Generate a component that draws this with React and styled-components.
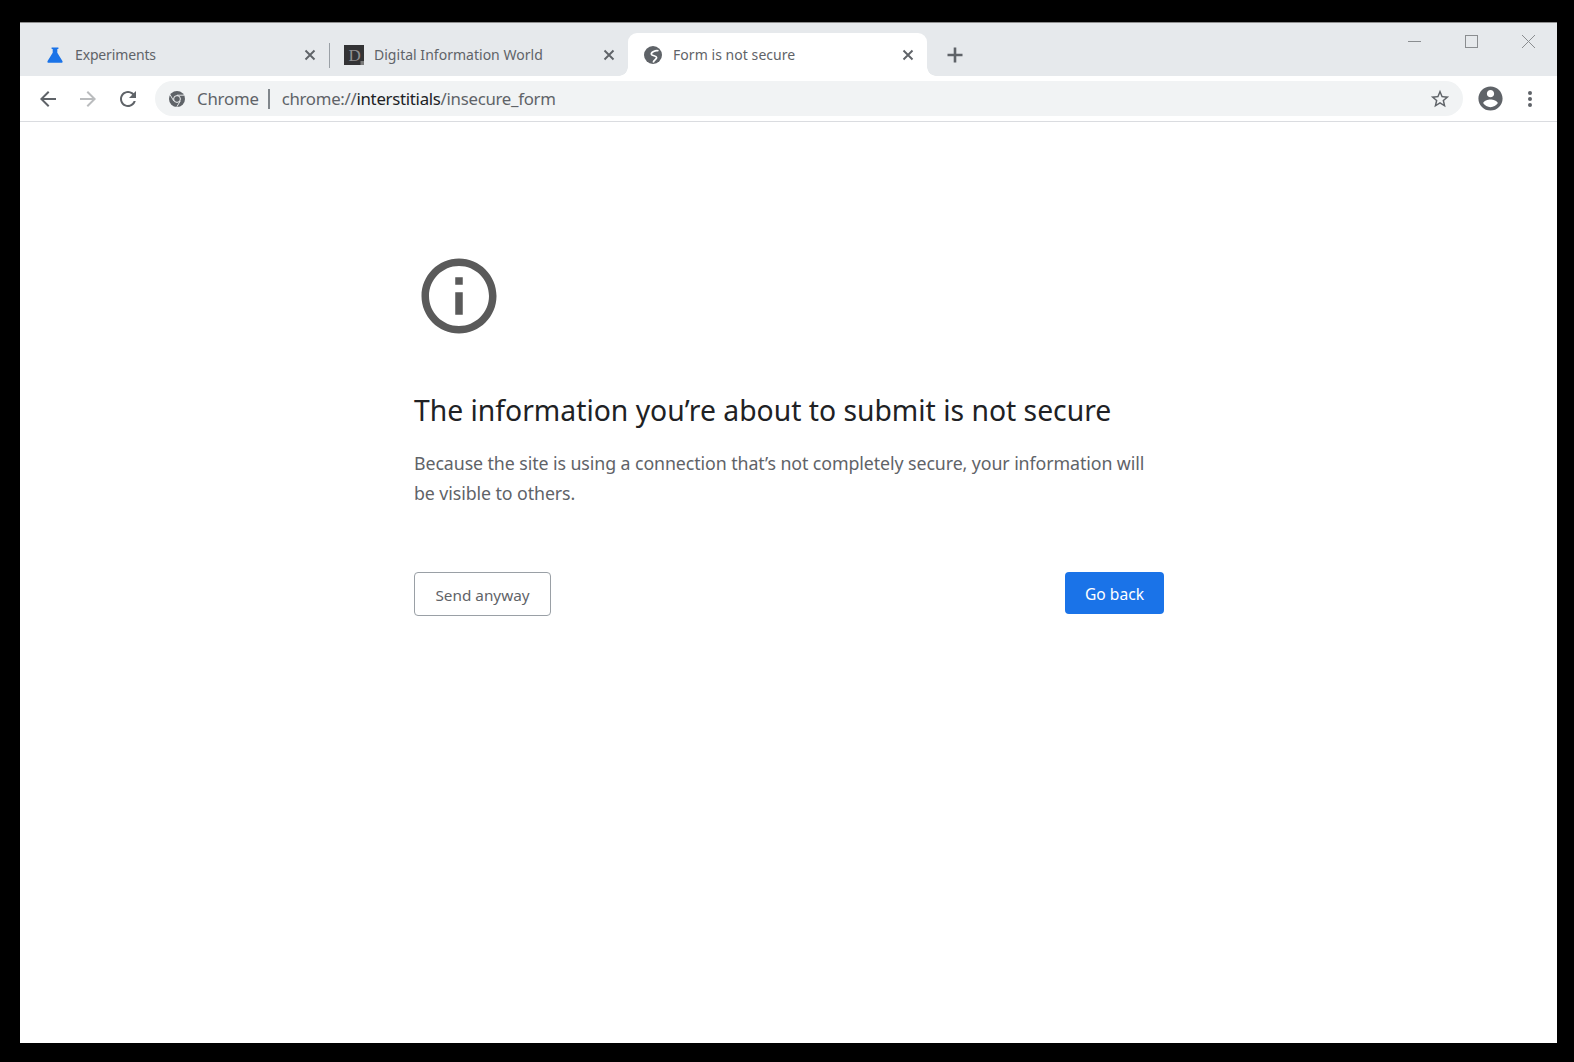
import React from "react";
import styled, { createGlobalStyle } from "styled-components";

const Global = createGlobalStyle`
  html, body { margin: 0; padding: 0; background: #000; }
  body { font-family: "Noto Sans", "Open Sans", sans-serif; }
`;

const Screen = styled.div`
  width: 1574px;
  height: 1062px;
  padding: 22px 17px 20px 20px;
  box-sizing: border-box;
  background: #000;
`;
const Win = styled.div`
  height: 100%;
  display: flex;
  flex-direction: column;
  background: #fff;
  border-top: 1px solid #8e8e8e;
`;
const TabStrip = styled.div`
  height: 53px;
  flex: none;
  display: flex;
  padding-top: 10px;
  box-sizing: border-box;
  background: #e6e9ec;
`;
const Tab = styled.div`
  position: relative;
  width: ${(p) => p.$w}px;
  height: 43px;
  box-sizing: border-box;
  padding: 0 ${(p) => p.$pr}px 0 ${(p) => p.$pl}px;
  display: flex;
  align-items: center;
  background: ${(p) => (p.$active ? "#fff" : "transparent")};
  border-radius: ${(p) => (p.$active ? "9px 9px 0 0" : "0")};
  ${(p) =>
    p.$active &&
    `
    &::before, &::after {
      content: "";
      position: absolute;
      bottom: 0;
      width: 9px;
      height: 9px;
    }
    &::before { left: -9px; background: radial-gradient(circle at 0 0, transparent 8.5px, #fff 9px); }
    &::after { right: -9px; background: radial-gradient(circle at 100% 0, transparent 8.5px, #fff 9px); }
  `}
`;
const TabIcon = styled.span`
  display: flex;
  flex: none;
  width: ${(p) => p.$w}px;
  margin-right: ${(p) => p.$gap}px;
`;
const TabTitle = styled.span`
  flex: 1;
  font-size: 14px;
  color: #5f6368;
  white-space: nowrap;
  line-height: 20px;
  letter-spacing: ${(p) => p.$ls}px;
`;
const TabClose = styled.svg`
  display: block;
  flex: none;
`;
const TabSep = styled.div`
  width: 1px;
  height: 25px;
  flex: none;
  margin-top: 10px;
  background: #9aa0a6;
`;
const NewTab = styled.svg`
  display: block;
  flex: none;
  margin: 14px 0 0 20px;
`;
const Caption = styled.div`
  margin-left: auto;
  display: flex;
  margin-top: -10px;
`;
const CapBtn = styled.svg`
  display: block;
  width: 15px;
  height: 15px;
  margin: ${(p) => p.$m};
`;
const Toolbar = styled.div`
  height: 46px;
  flex: none;
  display: flex;
  align-items: center;
  box-sizing: border-box;
  padding: 0 7px 0 7.5px;
  background: #fff;
  border-bottom: 1px solid #dadce0;
`;
const NavBtn = styled.div`
  width: 40px;
  height: 24px;
  flex: none;
  display: flex;
  justify-content: center;
  align-items: center;
`;
const Omni = styled.div`
  flex: none;
  width: 1308px;
  height: 35px;
  margin-left: 7.5px;
  border-radius: 18px;
  background: #f1f3f4;
  display: flex;
  align-items: center;
  padding: 0 12px 0 14px;
  box-sizing: border-box;
  font-size: 16.8px;
  color: #5f6368;
  white-space: nowrap;
`;
const OriginChip = styled.span`
  margin-left: 12px;
  letter-spacing: -0.2px;
`;
const ChipSep = styled.span`
  width: 2px;
  height: 20px;
  margin: 0 12px 0 9px;
  background: #80868b;
  flex: none;
`;
const UrlHost = styled.span`
  color: #202124;
`;
const Url = styled.span`
  flex: 1;
  letter-spacing: -0.28px;
`;
const ProfileBtn = styled.svg`
  display: block;
  flex: none;
  margin-left: 13px;
`;
const MenuBtn = styled.svg`
  display: block;
  flex: none;
  margin-left: 22px;
`;
const Page = styled.main`
  flex: 1;
  background: #fff;
  padding: 129px 0 0 394px;
`;
const Content = styled.div`
  width: 750px;
  margin: 0;
`;
const InfoIcon = styled.svg`
  display: block;
  width: 90px;
  height: 90px;
  margin-bottom: 49px;
`;
const Heading = styled.h1`
  margin: 0 0 18px;
  font-weight: 400;
  font-size: 28.3px;
  line-height: 40px;
  color: #202124;
  white-space: nowrap;
`;
const Para = styled.p`
  margin: 0;
  max-width: 735px;
  font-size: 17.8px;
  letter-spacing: -0.09px;
  line-height: 30px;
  color: #5f6368;
`;
const Actions = styled.div`
  display: flex;
  justify-content: space-between;
  align-items: flex-start;
  margin-top: 64px;
`;
const SecondaryBtn = styled.button`
  width: 137px;
  height: 44px;
  padding: 2px 0 0;
  background: #fff;
  border: 1px solid #9aa0a6;
  border-radius: 4px;
  color: #5f6368;
  font: 400 15.3px "Noto Sans", sans-serif;
`;
const PrimaryBtn = styled.button`
  width: 99px;
  height: 42px;
  padding: 2px 0 0;
  background: #1a73e8;
  border: none;
  border-radius: 4px;
  color: #fff;
  font: 400 15.6px "Noto Sans", sans-serif;
`;

const Mat = ({ d, size = 24, color = "#5f6368" }) => (
  <svg width={size} height={size} viewBox="0 0 24 24" fill={color} style={{ display: "block", flex: "none" }}>
    <path d={d} />
  </svg>
);

const ARROW = "M20 11H7.83l5.59-5.59L12 4l-8 8 8 8 1.41-1.41L7.83 13H20v-2z";
const FWD = "M4 11h12.17l-5.59-5.59L12 4l8 8-8 8-1.41-1.41L16.17 13H4v-2z";
const RELOAD = "M17.65 6.35C16.2 4.9 14.21 4 12 4c-4.42 0-7.99 3.58-7.99 8s3.57 8 7.99 8c3.73 0 6.84-2.55 7.73-6h-2.08c-.82 2.33-3.04 4-5.65 4-3.31 0-6-2.69-6-6s2.69-6 6-6c1.66 0 3.14.69 4.22 1.78L13 11h7V4l-2.35 2.35z";
const STAR = "M22 9.24l-7.19-.62L12 2 9.19 8.63 2 9.24l5.46 4.73L5.82 21 12 17.27 18.18 21l-1.63-7.03L22 9.24zM12 15.4l-3.76 2.27 1-4.28-3.32-2.88 4.38-.38L12 6.1l1.71 4.04 4.38.38-3.32 2.88 1 4.28L12 15.4z";
const ACCOUNT = "M12 2C6.48 2 2 6.48 2 12s4.48 10 10 10 10-4.48 10-10S17.52 2 12 2zm0 3c1.66 0 3 1.34 3 3s-1.34 3-3 3-3-1.34-3-3 1.34-3 3-3zm0 14.2c-2.5 0-4.71-1.28-6-3.22.03-1.99 4-3.08 6-3.08 1.99 0 5.97 1.09 6 3.08-1.29 1.94-3.5 3.22-6 3.22z";
const INFO = "M11 7h2v2h-2zm0 4h2v6h-2zm1-9C6.48 2 2 6.48 2 12s4.48 10 10 10 10-4.48 10-10S17.52 2 12 2zm0 18c-4.41 0-8-3.59-8-8s3.59-8 8-8 8 3.59 8 8-3.59 8-8 8z";

const Close = () => (
  <TabClose width="12" height="12" viewBox="0 0 12 12">
    <path d="M1.5 1.5l9 9M10.5 1.5l-9 9" stroke="#5f6368" strokeWidth="1.9" fill="none" />
  </TabClose>
);

const Flask = () => (
  <svg width="16" height="16" viewBox="0 0 16 16" style={{ display: "block" }}>
    <path d="M4.6 0.5h6.8v1.6h-1.1v3.6L15.4 14c.5 1 .1 1.8-1 1.8H1.6c-1.1 0-1.5-.8-1-1.8L5.7 5.7V2.1H4.6z" fill="#1a73e8" />
  </svg>
);

const DFav = () => (
  <svg width="20" height="20" viewBox="0 0 20 20" style={{ display: "block" }}>
    <rect width="20" height="20" fill="#333335" />
    <rect x="16.5" y="16" width="3.5" height="4" fill="#7a7a7a" />
    <text x="4.5" y="16" fontFamily="Liberation Serif, serif" fontSize="17" fill="#8f8f8f">D</text>
  </svg>
);

const Globe = () => (
  <svg width="18" height="18" viewBox="0 0 18 18" style={{ display: "block" }}>
    <circle cx="9" cy="9" r="9" fill="#5f6368" />
    <path d="M14.5 4.8C11.5 3.8 6.8 6.2 7.4 8.3C8 10.2 12.2 9.4 12.6 11.4C12.9 13 10 14 9.2 16.4" stroke="#fff" strokeWidth="1.7" fill="none" />
  </svg>
);

const ChromeLogo = () => (
  <svg width="16" height="16" viewBox="0 0 16 16" style={{ display: "block", flex: "none" }}>
    <circle cx="8" cy="8" r="8" fill="#5f6368" />
    <circle cx="8" cy="8" r="3.4" fill="#5f6368" stroke="#f1f3f4" strokeWidth="1" />
    <path d="M8 4.2h7M4.7 9.9L1.2 3.9M11.3 9.9l-3.5 6" stroke="#f1f3f4" strokeWidth="0.9" fill="none" />
  </svg>
);

export default function App() {
  return (
    <>
      <Global />
      <Screen>
        <Win>
          <TabStrip>
            <Tab $w={309} $pl={27} $pr={13}>
              <TabIcon $w={16} $gap={12}><Flask /></TabIcon>
              <TabTitle $ls={-0.15}>Experiments</TabTitle>
              <Close />
            </Tab>
            <TabSep />
            <Tab $w={298} $pl={14} $pr={13}>
              <TabIcon $w={20} $gap={10}><DFav /></TabIcon>
              <TabTitle $ls={0.02}>Digital Information World</TabTitle>
              <Close />
            </Tab>
            <Tab $active $w={299} $pl={16} $pr={13}>
              <TabIcon $w={18} $gap={11}><Globe /></TabIcon>
              <TabTitle $ls={0.05}>Form is not secure</TabTitle>
              <Close />
            </Tab>
            <NewTab width="16" height="16" viewBox="0 0 16 16">
              <path d="M8 .5v15M.5 8h15" stroke="#5f6368" strokeWidth="2.6" fill="none" />
            </NewTab>
            <Caption>
              <CapBtn $m="12px 0 0 0" viewBox="0 0 15 15">
                <path d="M1 6.5h13" stroke="#8a8d90" strokeWidth="1" fill="none" />
              </CapBtn>
              <CapBtn $m="11px 0 0 42px" viewBox="0 0 15 15">
                <rect x="1.5" y="1.5" width="12" height="12" stroke="#8a8d90" fill="none" />
              </CapBtn>
              <CapBtn $m="11px 21px 0 42px" viewBox="0 0 15 15">
                <path d="M1 1l13 13M14 1L1 14" stroke="#8a8d90" strokeWidth="1" fill="none" />
              </CapBtn>
            </Caption>
          </TabStrip>
          <Toolbar>
            <NavBtn><Mat d={ARROW} /></NavBtn>
            <NavBtn><Mat d={FWD} color="#babcbe" /></NavBtn>
            <NavBtn><Mat d={RELOAD} /></NavBtn>
            <Omni>
              <ChromeLogo />
              <OriginChip>Chrome</OriginChip>
              <ChipSep />
              <Url>chrome://<UrlHost>interstitials</UrlHost>/insecure_form</Url>
              <Mat d={STAR} size={22} />
            </Omni>
            <ProfileBtn width="29" height="29" viewBox="0 0 24 24" fill="#5f6368"><path d={ACCOUNT} /></ProfileBtn>
            <MenuBtn width="6" height="18" viewBox="0 0 6 18" fill="#5f6368">
              <circle cx="3" cy="3" r="2" /><circle cx="3" cy="9" r="2" /><circle cx="3" cy="15" r="2" />
            </MenuBtn>
          </Toolbar>
          <Page>
            <Content>
              <InfoIcon viewBox="0 0 24 24" fill="#5a5a5a"><path d={INFO} /></InfoIcon>
              <Heading>The information you’re about to submit is not secure</Heading>
              <Para>Because the site is using a connection that’s not completely secure, your information will be visible to others.</Para>
              <Actions>
                <SecondaryBtn>Send anyway</SecondaryBtn>
                <PrimaryBtn>Go back</PrimaryBtn>
              </Actions>
            </Content>
          </Page>
        </Win>
      </Screen>
    </>
  );
}
